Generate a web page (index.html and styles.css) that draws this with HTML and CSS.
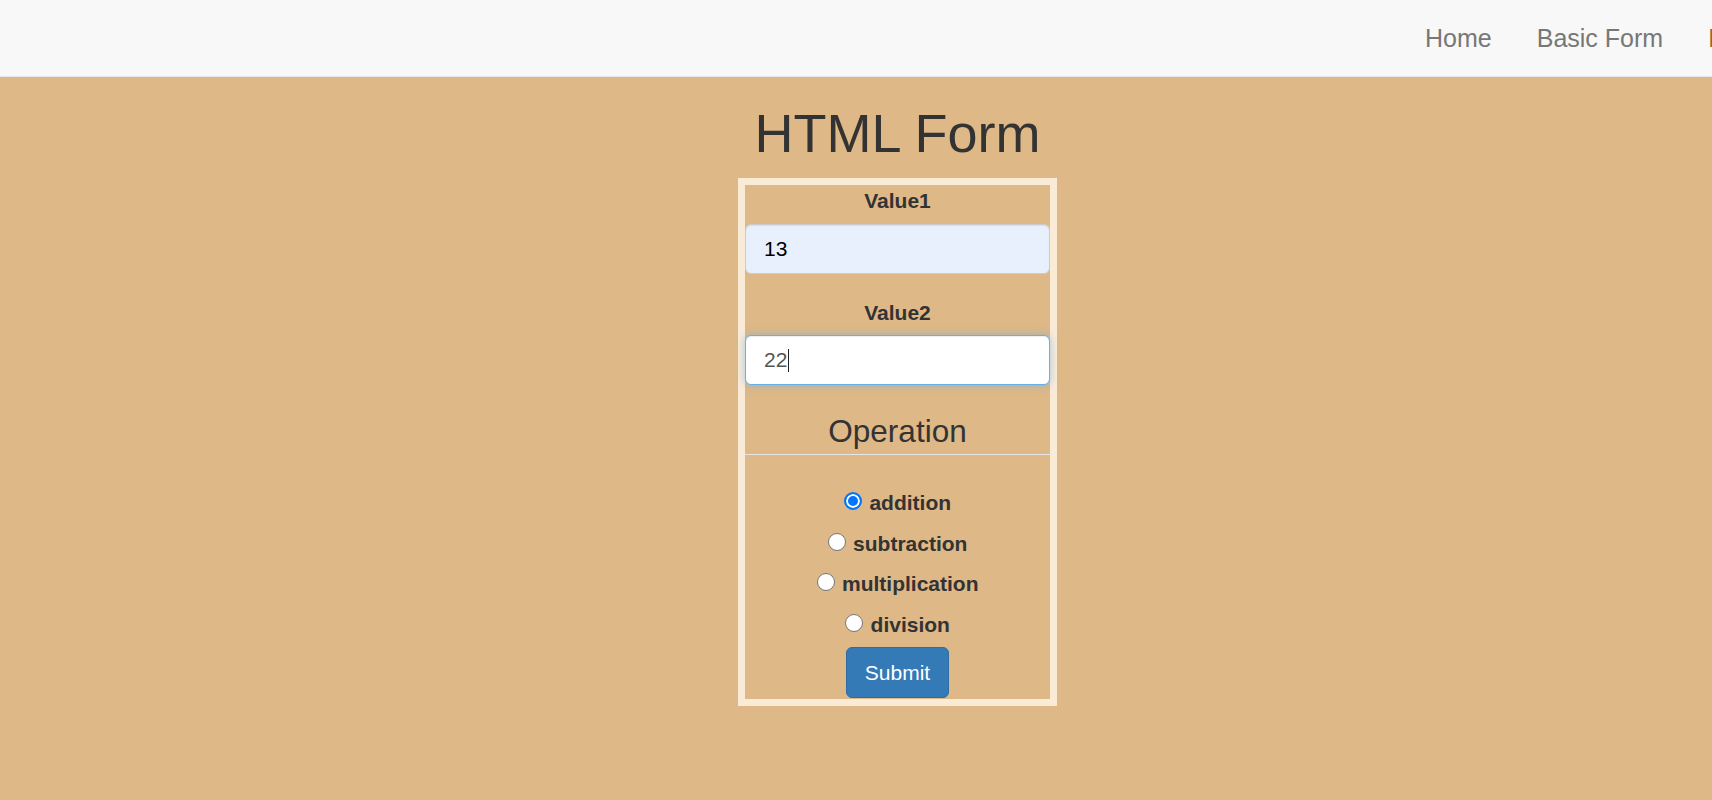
FILE: index.html
```html
<!DOCTYPE html>
<html lang="en">
<head>
<meta charset="utf-8">
<title>HTML Form</title>
<link rel="stylesheet" href="styles.css">
</head>
<body>
<nav class="navbar">
  <ul class="nav-links">
    <li><a href="#" class="nav-link">Home</a></li>
    <li><a href="#" class="nav-link">Basic Form</a></li>
    <li><a href="#" class="nav-link nav-link-active">Results</a></li>
  </ul>
</nav>
<main class="page">
  <h1 class="title">HTML Form</h1>
  <form class="calc-form">
    <div class="form-group">
      <label class="field-label" for="value1">Value1</label>
      <input class="field-input field-autofill" id="value1" type="text" value="13">
    </div>
    <div class="form-group">
      <label class="field-label" for="value2">Value2</label>
      <div class="input-wrap">
        <input class="field-input field-focus" id="value2" type="text" value="22">
        <span class="caret"></span>
      </div>
    </div>
    <fieldset class="operations">
      <legend class="legend">Operation</legend>
      <label class="radio-row"><input class="radio" type="radio" name="op" checked><span class="radio-text">addition</span></label>
      <label class="radio-row"><input class="radio" type="radio" name="op"><span class="radio-text">subtraction</span></label>
      <label class="radio-row"><input class="radio" type="radio" name="op"><span class="radio-text">multiplication</span></label>
      <label class="radio-row"><input class="radio" type="radio" name="op"><span class="radio-text">division</span></label>
    </fieldset>
    <div class="actions">
      <button class="btn-submit" type="button">Submit</button>
    </div>
  </form>
</main>
</body>
</html>
```
FILE: styles.css
```css
* {
  box-sizing: border-box;
}

html, body {
  margin: 0;
  padding: 0;
}

body {
  background: #deb887;
  color: #333;
  font-family: "Liberation Sans", Arial, Helvetica, sans-serif;
  font-size: 21px;
  overflow: hidden;
  height: 800px;
}

.navbar {
  height: 77px;
  background: #f8f8f8;
  border-bottom: 1px solid #e7e7e7;
  display: flex;
  justify-content: flex-end;
  overflow: hidden;
}

.nav-links {
  list-style: none;
  margin: 0 -102px 0 0;
  padding: 0;
  display: flex;
  flex-shrink: 0;
}

.nav-link {
  display: block;
  padding: 23px 22.5px 23px;
  font-size: 25px;
  line-height: 30px;
  color: #777;
  text-decoration: none;
  white-space: nowrap;
}

.nav-link-active {
  color: #8a6d3b;
}

.page {
  display: flex;
  flex-direction: column;
  align-items: center;
  padding-left: 83px;
}

.title {
  margin: 27px 0 15px;
  font-size: 54px;
  font-weight: 400;
  line-height: 1.1;
  color: #333;
}

.calc-form {
  width: 319px;
  border: 7px solid #faebd7;
  padding: 1px 0 0;
  text-align: center;
}

.form-group {
  margin-bottom: 24px;
}

.field-label {
  display: block;
  font-weight: 700;
  line-height: 30px;
  margin-bottom: 7.5px;
}

.input-wrap {
  position: relative;
}

.field-input {
  display: block;
  width: 100%;
  height: 50px;
  padding: 0 18px;
  font-family: "Liberation Sans", Arial, Helvetica, sans-serif;
  font-size: 21px;
  color: #555;
  background: #fff;
  border: 1px solid #ccc;
  border-radius: 6px;
  box-shadow: inset 0 1px 1px rgba(0, 0, 0, .075);
  outline: none;
}

.field-autofill {
  background: #e8f0fe;
  color: #000;
}

.field-focus {
  border-color: #66afe9;
  box-shadow: inset 0 1px 1px rgba(0, 0, 0, .075), 0 0 8px rgba(102, 175, 233, .6);
}

.caret {
  position: absolute;
  left: 43px;
  top: 14px;
  width: 1px;
  height: 23px;
  background: #222;
}

.operations {
  border: 0;
  margin: 0;
  padding: 0;
  min-width: 0;
}

.legend {
  display: block;
  width: 100%;
  padding: 0;
  margin-bottom: 27.5px;
  font-size: 31.5px;
  line-height: 45px;
  color: #333;
  border-bottom: 1px solid #e5e5e5;
}

.radio-row {
  display: flex;
  justify-content: center;
  align-items: baseline;
  height: 40.8px;
  line-height: 40.8px;
  font-weight: 700;
}

.radio {
  appearance: none;
  -webkit-appearance: none;
  width: 18px;
  height: 18px;
  margin: 0 7.5px 1px 0;
  border: 1px solid #767676;
  border-radius: 50%;
  background: #fff;
}

.radio:checked {
  border: 2px solid #0075ff;
  background: #0075ff;
  box-shadow: inset 0 0 0 2px #fff;
}

.radio-text {
  color: #333;
}

.actions {
  padding: 1px 0 1px;
}

.btn-submit {
  height: 51px;
  padding: 0 18px;
  font-family: "Liberation Sans", Arial, Helvetica, sans-serif;
  font-size: 21px;
  color: #fff;
  background: #337ab7;
  border: 1px solid #2e6da4;
  border-radius: 6px;
}
```
